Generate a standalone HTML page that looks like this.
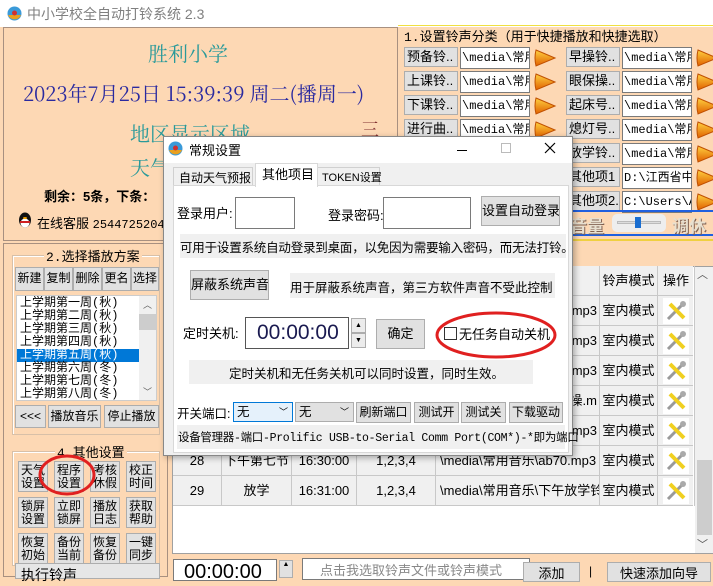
<!DOCTYPE html>
<html><head><meta charset="utf-8"><style>
*{box-sizing:border-box;margin:0;padding:0}
body{width:713px;height:577px;overflow:hidden;background:#fdd8b4;font-family:"Liberation Sans","Noto Sans CJK SC",sans-serif;font-size:12px;color:#000;position:relative}
.a{position:absolute;white-space:nowrap}
.btn{position:absolute;background:#e1e1e1;border:1px solid #adadad;text-align:center;font-size:12px;white-space:nowrap;overflow:hidden}
.sim{font-family:"Liberation Mono","Noto Sans CJK SC",monospace}
.inp{position:absolute;background:#fff;border:1px solid #7a7a7a;overflow:hidden;white-space:nowrap}
.gb{position:absolute;border:1px solid #d8c0a8;box-shadow:inset 1px 1px 0 #fff}
.sq{position:absolute;width:30px;height:31px;background:#e1e1e1;border:1px solid #adadad;font-size:12px;line-height:13px;text-align:center;padding-top:2px}
.row{position:absolute;left:173px;width:520px;height:30px;border-bottom:1px solid #c8c8c8;background:#f0f0f0}
.c{position:absolute;top:0;height:30px;line-height:30px;text-align:center;border-right:1px solid #c8c8c8;font-size:13px;overflow:hidden;white-space:nowrap}
.g{position:absolute;background:#f0f0f0}
</style></head><body>
<div class="a" style="left:0;top:0;width:713px;height:27px;background:#fff"></div>
<svg class="a" style="left:7px;top:6px" width="15" height="15"><circle cx="7.5" cy="7.5" r="7" fill="#3a9ad9"/><path d="M1 9 A7 7 0 0 0 14 9 Z" fill="#e8a020"/><circle cx="7.5" cy="7" r="2.5" fill="#d03030"/></svg>
<div class="a" style="left:27px;top:4px;font-size:14px;color:#808080">中小学校全自动打铃系统 2.3</div>

<div class="a" style="left:3px;top:27px;width:395px;height:214px;border:1px solid #a89080"></div>
<div class="a" style="left:148px;top:38px;font-family:'Noto Serif CJK SC',serif;font-size:20px;color:#2a9a9a">胜利小学</div>
<div class="a" style="left:23px;top:78px;font-family:'Noto Serif CJK SC',serif;font-size:20px;color:#2a2aa0">2023年7月25日 15:39:39 周二(播周一)</div>
<div class="a" style="left:130px;top:118px;font-family:'Noto Serif CJK SC',serif;font-size:20px;color:#2a9a9a">地区显示区域</div>
<div class="a" style="left:130px;top:152px;font-family:'Noto Serif CJK SC',serif;font-size:20px;color:#2a9a9a">天气</div>
<div class="a" style="left:361px;top:116px;font-family:'Noto Serif CJK SC',serif;font-size:18px;color:#803030">三</div>
<div class="a" style="left:44px;top:186px;font-size:13px;font-weight:bold">剩余：5条，下条：</div>
<svg class="a" style="left:17px;top:212px" width="16" height="17"><ellipse cx="8" cy="8" rx="6" ry="7.5" fill="#111"/><ellipse cx="8" cy="11" rx="4.5" ry="4.5" fill="#fff"/><rect x="3" y="9" width="10" height="2" fill="#d02020"/><ellipse cx="8" cy="6" rx="2" ry="1" fill="#f0a000"/></svg>
<div class="a" style="left:37px;top:213px;font-size:13px">在线客服 <span class="sim" style="font-size:12px">2544725204</span></div>

<div class="a" style="left:398px;top:25px;width:315px;height:1px;background:#f0e040"></div>
<div class="a sim" style="left:404px;top:26px;font-size:13px">1.设置铃声分类（用于快捷播放和快捷选取）</div>
<div id="s1"></div>
<div class="a" style="left:566px;top:210px;width:147px;height:2px;background:#2060e0"></div>
<div class="a" style="left:566px;top:234px;width:147px;height:2px;background:#2060e0"></div>
<div class="a" style="left:570px;top:212px;font-size:17px;font-weight:bold;color:#e8e0d0;text-shadow:1px 1px 0 #806050">音量</div>
<div class="a" style="left:612px;top:214px;width:54px;height:18px;background:#eee;border-radius:5px"></div>
<div class="a" style="left:617px;top:221px;width:44px;height:3px;background:#ddd;border:1px solid #bbb"></div>
<div class="a" style="left:635px;top:217px;width:6px;height:11px;background:#1a6ed0"></div>
<div class="a" style="left:672px;top:212px;font-size:17px;font-weight:bold;color:#e8e0d0;text-shadow:1px 1px 0 #806050">调休</div>
<div class="a" style="left:398px;top:239px;width:315px;height:2px;background:#f0d040"></div>

<div class="a" style="left:3px;top:243px;width:165px;height:334px;border:1px solid #a89080"></div>
<div class="gb" style="left:12px;top:255px;width:148px;height:180px"></div>
<div class="a sim" style="left:44px;top:246px;font-size:13px;background:#fdd8b4;padding:0 2px">2.选择播放方案</div>
<div class="btn sim" style="left:15px;top:267px;width:29px;height:24px;line-height:22px">新建</div>
<div class="btn sim" style="left:44px;top:267px;width:29px;height:24px;line-height:22px">复制</div>
<div class="btn sim" style="left:73px;top:267px;width:29px;height:24px;line-height:22px">删除</div>
<div class="btn sim" style="left:102px;top:267px;width:29px;height:24px;line-height:22px">更名</div>
<div class="btn sim" style="left:131px;top:267px;width:28px;height:24px;line-height:22px">选择</div>
<div class="a" style="left:16px;top:295px;width:141px;height:106px;background:#fff;border:1px solid #ccc;overflow:hidden">
<div class="sim" style="font-size:12px;line-height:13px;padding-top:1px">
<div style="padding-left:3px">上学期第一周(秋)</div><div style="padding-left:3px">上学期第二周(秋)</div><div style="padding-left:3px">上学期第三周(秋)</div><div style="padding-left:3px">上学期第四周(秋)</div><div style="padding-left:3px;background:#0078d7;color:#fff;width:122px">上学期第五周(秋)</div><div style="padding-left:3px">上学期第六周(冬)</div><div style="padding-left:3px">上学期第七周(冬)</div><div style="padding-left:3px">上学期第八周(冬)</div></div>
<div class="a" style="left:122px;top:0;width:17px;height:104px;background:#f0f0f0"></div>
<div class="a" style="left:122px;top:18px;width:17px;height:16px;background:#cdcdcd"></div>
<div class="a" style="left:126px;top:2px;font-size:9px;color:#606060">︿</div>
<div class="a" style="left:126px;top:89px;font-size:9px;color:#606060">﹀</div>
</div>
<div class="btn" style="left:15px;top:405px;width:31px;height:23px;line-height:21px">&lt;&lt;&lt;</div>
<div class="btn" style="left:48px;top:405px;width:53px;height:23px;line-height:21px">播放音乐</div>
<div class="btn" style="left:104px;top:405px;width:55px;height:23px;line-height:21px">停止播放</div>
<div class="gb" style="left:12px;top:451px;width:148px;height:115px"></div>
<div class="a sim" style="left:55px;top:442px;font-size:13px;background:#fdd8b4;padding:0 2px">4.其他设置</div>
<div id="sq"></div>
<svg class="a" style="left:38px;top:454px" width="60" height="44"><ellipse cx="29" cy="21" rx="27" ry="19" fill="none" stroke="#e02020" stroke-width="3"/></svg>
<div class="a" style="left:15px;top:563px;width:145px;height:16px;background:#e6e6e6;border:1px solid #adadad;font-size:14px;padding-left:5px;line-height:22px">执行铃声</div>

<div class="a" style="left:172px;top:266px;width:541px;height:288px;background:#fff;border:1px solid #a0a0a0"></div>
<div id="tb"></div>
<div class="a" style="left:695px;top:267px;width:18px;height:286px;background:#f0f0f0"></div>
<div class="a" style="left:697px;top:266px;font-size:11px;color:#555">︿</div>
<div class="a" style="left:697px;top:536px;font-size:11px;color:#555">﹀</div>
<div class="a" style="left:697px;top:460px;width:15px;height:75px;background:#cdcdcd"></div>

<div class="inp" style="left:173px;top:559px;width:104px;height:22px;font-size:20px;line-height:24px;padding-left:10px">00:00:00</div>
<div class="btn" style="left:279px;top:560px;width:14px;height:18px;font-size:7px">▲</div>
<div class="inp" style="left:302px;top:558px;width:228px;height:22px;color:#888;font-size:13px;padding-left:17px;line-height:24px">点击我选取铃声文件或铃声模式</div>
<div class="btn" style="left:523px;top:562px;width:57px;height:20px;font-size:13px;line-height:22px">添加</div>
<div class="a" style="left:589px;top:564px;font-size:12px">|</div>
<div class="btn" style="left:607px;top:562px;width:104px;height:20px;font-size:13px;line-height:22px">快速添加向导</div>

<div class="a" style="left:163px;top:136px;width:410px;height:320px;background:#f0f0f0;border:1px solid #888;box-shadow:2px 2px 6px rgba(0,0,0,.3)"></div>
<div class="a" style="left:164px;top:137px;width:408px;height:26px;background:#fff"></div>
<svg class="a" style="left:168px;top:141px" width="15" height="15"><circle cx="7.5" cy="7.5" r="7" fill="#3a9ad9"/><path d="M1 9 A7 7 0 0 0 14 9 Z" fill="#e8a020"/><circle cx="7.5" cy="7" r="2.5" fill="#d03030"/></svg>
<div class="a" style="left:189px;top:140px;font-size:13px">常规设置</div>
<div class="a" style="left:457px;top:150px;width:10px;height:1px;background:#000"></div>
<div class="a" style="left:501px;top:143px;width:10px;height:10px;border:1px solid #bbb"></div>
<svg class="a" style="left:544px;top:142px" width="12" height="12"><path d="M1 1L11 11M11 1L1 11" stroke="#000" stroke-width="1.2"/></svg>
<div class="a" style="left:173px;top:167px;width:80px;height:20px;border:1px solid #d0d0d0;background:#f0f0f0;font-size:12px;padding-left:5px;line-height:20px">自动天气预报</div>
<div class="a" style="left:317px;top:167px;width:63px;height:20px;border:1px solid #d0d0d0;background:#f0f0f0;font-size:11px;padding-left:4px;line-height:20px">TOKEN设置</div>
<div class="a" style="left:173px;top:185px;width:396px;height:268px;background:#fff;border:1px solid #d8d8d8"></div>
<div class="a" style="left:255px;top:163px;width:63px;height:24px;background:#fff;border:1px solid #d8d8d8;border-bottom:none;font-size:13px;padding-left:6px;line-height:22px">其他项目</div>

<div class="a" style="left:177px;top:203px;font-size:13px">登录用户:</div>
<div class="inp" style="left:235px;top:197px;width:60px;height:32px"></div>
<div class="a" style="left:328px;top:205px;font-size:13px">登录密码:</div>
<div class="inp" style="left:383px;top:197px;width:88px;height:32px"></div>
<div class="btn" style="left:481px;top:196px;width:79px;height:30px;font-size:13px;line-height:28px">设置自动登录</div>
<div class="g" style="left:180px;top:234px;width:386px;height:24px"></div>
<div class="a" style="left:180px;top:237px;font-size:12.5px;letter-spacing:-.2px">可用于设置系统自动登录到桌面，以免因为需要输入密码，而无法打铃。</div>
<div class="btn" style="left:190px;top:270px;width:79px;height:30px;font-size:13px;line-height:28px">屏蔽系统声音</div>
<div class="g" style="left:290px;top:273px;width:265px;height:25px"></div>
<div class="a" style="left:290px;top:277px;font-size:12.5px">用于屏蔽系统声音，第三方软件声音不受此控制</div>
<div class="a" style="left:183px;top:323px;font-size:13px">定时关机:</div>
<div class="inp" style="left:245px;top:317px;width:104px;height:32px;font-size:21px;line-height:30px;padding-left:11px;color:#1a1a50;border-color:#555">00:00:00</div>
<div class="btn" style="left:351px;top:318px;width:15px;height:15px;font-size:7px;line-height:14px;background:#ececec">▲</div>
<div class="btn" style="left:351px;top:333px;width:15px;height:15px;font-size:7px;line-height:14px;background:#ececec">▼</div>
<div class="btn" style="left:376px;top:319px;width:49px;height:30px;font-size:13px;line-height:28px">确定</div>
<div class="a" style="left:444px;top:327px;width:13px;height:13px;border:1px solid #333;background:#fff"></div>
<div class="a" style="left:459px;top:324px;font-size:13px">无任务自动关机</div>
<svg class="a" style="left:434px;top:310px" width="126" height="50"><ellipse cx="62" cy="25" rx="59" ry="22" fill="none" stroke="#e02020" stroke-width="3"/></svg>
<div class="g" style="left:189px;top:360px;width:344px;height:24px"></div>
<div class="a" style="left:229px;top:363px;font-size:12.5px">定时关机和无任务关机可以同时设置，同时生效。</div>
<div class="a" style="left:177px;top:403px;font-size:12.5px">开关端口:</div>
<div class="a" style="left:233px;top:402px;width:60px;height:20px;background:#e5f1fb;border:1px solid #0078d7;font-size:12.5px;padding-left:3px;line-height:18px">无<span style="position:absolute;right:4px;font-size:9px">﹀</span></div>
<div class="a" style="left:295px;top:402px;width:59px;height:20px;background:#e1e1e1;border:1px solid #adadad;font-size:12.5px;padding-left:3px;line-height:18px">无<span style="position:absolute;right:4px;font-size:9px">﹀</span></div>
<div class="btn" style="left:356px;top:402px;width:55px;height:21px;line-height:19px">刷新端口</div>
<div class="btn" style="left:414px;top:402px;width:45px;height:21px;line-height:19px">测试开</div>
<div class="btn" style="left:461px;top:402px;width:45px;height:21px;line-height:19px">测试关</div>
<div class="btn" style="left:509px;top:402px;width:54px;height:21px;line-height:19px">下载驱动</div>
<div class="g" style="left:177px;top:425px;width:388px;height:24px"></div>
<div class="a sim" style="left:178px;top:429px;font-size:11.5px;letter-spacing:-.3px">设备管理器-端口-Prolific USB-to-Serial Comm Port(COM*)-*即为端口</div>

<script>
var s='',L=[['预备铃..','\\media\\常用音'],['上课铃..','\\media\\常用音'],['下课铃..','\\media\\常用音'],['进行曲..','\\media\\常用音']],R=[['早操铃..','\\media\\常用音'],['眼保操..','\\media\\常用音'],['起床号..','\\media\\常用音'],['熄灯号..','\\media\\常用音'],['放学铃..','\\media\\常用音'],['其他项1','D:\\江西省中小'],['其他项2.','C:\\Users\\Adm']];
function arr(x,y){return '<svg class="a" style="left:'+x+'px;top:'+y+'px" width="24" height="20"><defs><linearGradient id="o" x1="0" y1="0" x2="0" y2="1"><stop offset="0" stop-color="#ffd040"/><stop offset="1" stop-color="#e06000"/></linearGradient></defs><path d="M3 2 L22 10 L3 18 Q1 10 3 2Z" fill="url(#o)" stroke="#c05000" stroke-width="1"/></svg>';}
function r(x,y,a,b){return '<div class="btn" style="left:'+x+'px;top:'+y+'px;width:54px;height:20px;line-height:18px;font-size:13px;text-align:left;padding-left:2px">'+a+'</div><div class="inp sim" style="left:'+(x+56)+'px;top:'+y+'px;width:70px;height:22px;font-size:12px;line-height:20px;padding-left:1px">'+b+'</div>'+arr(x+129,y+1);}
L.forEach(function(v,i){s+=r(404,47+i*24,v[0],v[1]);});
R.forEach(function(v,i){s+=r(566,47+i*24,v[0],v[1]);});
document.getElementById('s1').outerHTML=s;
var q=['天气设置','程序设置','考核休假','校正时间','锁屏设置','立即锁屏','播放日志','获取帮助','恢复初始','备份当前','恢复备份','一键同步'],t='';
q.forEach(function(v,i){t+='<div class="sq" style="left:'+(18+(i%4)*36)+'px;top:'+(461+Math.floor(i/4)*36)+'px">'+v.slice(0,2)+'<br>'+v.slice(2)+'</div>';});
document.getElementById('sq').outerHTML=t;
var X=[173,222,292,357,436,600,658,695];
function rw(y,v,ra){var o='<div class="row" style="top:'+y+'px">';for(var i=0;i<7;i++){var st='';if(i==4)st=ra?'text-align:right;padding-right:2px;':'text-align:left;padding-left:4px;';o+='<div class="c" style="left:'+(X[i]-173)+'px;width:'+(X[i+1]-X[i])+'px;'+st+'">'+v[i]+'</div>';}return o+'</div>';}
var tool='<svg width="26" height="26" style="margin-top:2px;background:#fff"><path d="M5 21 L20 6" stroke="#999" stroke-width="3"/><path d="M7 6 L21 20" stroke="#f0d020" stroke-width="4"/><circle cx="20" cy="6" r="3" fill="#aaa"/></svg>';
var h=rw(266,['','','','','','铃声模式','操作']);
for(var k=0;k<5;k++)h+=rw(296+k*30,['','','','',k==3?'操.m':'mp3','室内模式',tool],1);
h+=rw(446,['28','下午第七节','16:30:00','1,2,3,4','\\media\\常用音乐\\ab70.mp3','室内模式',tool]);
h+=rw(476,['29','放学','16:31:00','1,2,3,4','\\media\\常用音乐\\下午放学铃','室内模式',tool]);
document.getElementById('tb').outerHTML=h;
</script>
</body></html>
